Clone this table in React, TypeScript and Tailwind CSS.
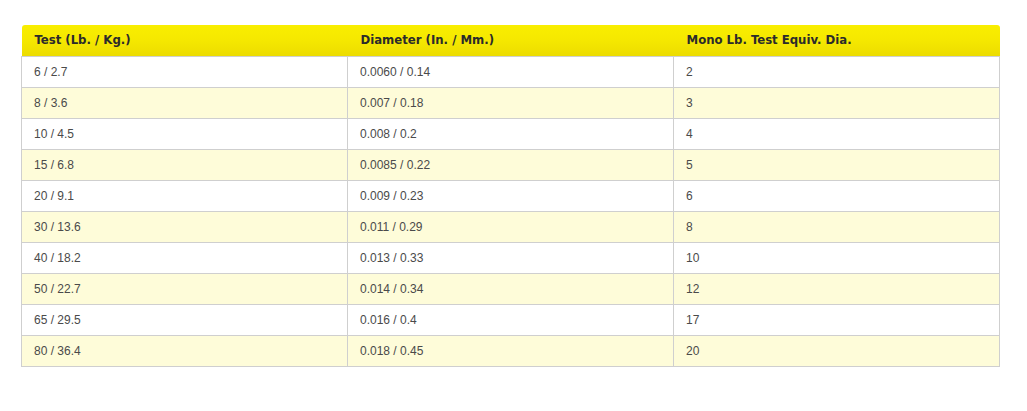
import React from 'react';

const rows: [string, string, string][] = [
  ['6 / 2.7', '0.0060 / 0.14', '2'],
  ['8 / 3.6', '0.007 / 0.18', '3'],
  ['10 / 4.5', '0.008 / 0.2', '4'],
  ['15 / 6.8', '0.0085 / 0.22', '5'],
  ['20 / 9.1', '0.009 / 0.23', '6'],
  ['30 / 13.6', '0.011 / 0.29', '8'],
  ['40 / 18.2', '0.013 / 0.33', '10'],
  ['50 / 22.7', '0.014 / 0.34', '12'],
  ['65 / 29.5', '0.016 / 0.4', '17'],
  ['80 / 36.4', '0.018 / 0.45', '20'],
];

const headers = ['Test (Lb. / Kg.)', 'Diameter (In. / Mm.)', 'Mono Lb. Test Equiv. Dia.'];

export default function App() {
  return (
    <div className="w-[1027px] h-[411px] bg-white pt-[25px] pl-[21px] font-['Liberation_Sans',Arial,sans-serif]">
      <table className="w-[979px] table-fixed border-collapse">
        <thead>
          <tr className="h-[31px] bg-gradient-to-b from-[#f9ee00] via-[#f5e800] to-[#ecdc00]">
            {headers.map((h) => (
              <th
                key={h}
                className="text-left font-bold text-[13px] text-[#2b2b2b] pl-[13px] pb-[1px] font-['DejaVu_Sans_Condensed','DejaVu_Sans',sans-serif] first:rounded-tl-[3px] last:rounded-tr-[3px]"
              >
                {h}
              </th>
            ))}
          </tr>
        </thead>
        <tbody>
          {rows.map((r, i) => (
            <tr key={i} className={`h-[31px] ${i % 2 === 1 ? 'bg-[#fefcd9]' : 'bg-white'}`}>
              {r.map((c, j) => (
                <td key={j} className="border border-[#cfcfcf] pl-[12px] text-[12px] text-[#4a4a4a]">
                  {c}
                </td>
              ))}
            </tr>
          ))}
        </tbody>
      </table>
    </div>
  );
}
